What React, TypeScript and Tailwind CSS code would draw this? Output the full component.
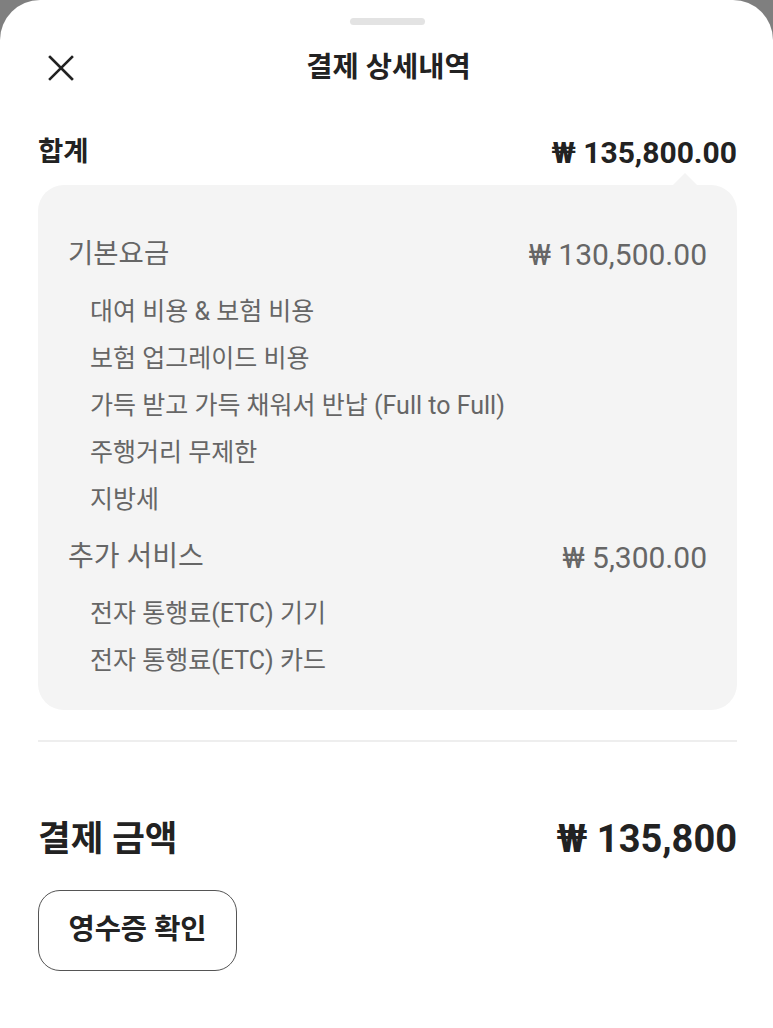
import React from "react";

const font = { fontFamily: "Roboto, 'Noto Sans CJK KR', sans-serif" };

function Sub({ children }: { children: React.ReactNode }) {
  return <div className="h-[47px] flex items-center pl-[22px] text-[25px] text-[#666]">{children}</div>;
}

export default function App() {
  return (
    <div className="w-[773px] h-[1028px] bg-[#7f7f7f] overflow-hidden" style={font}>
      <div className="w-full h-full bg-white rounded-t-[40px] flex flex-col pl-[38px] pr-[36px]">
        <div className="flex justify-center pt-[18px]">
          <div className="w-[75px] h-[7px] rounded-full bg-[#e3e3e3]" />
        </div>
        <div className="relative h-[72px] mt-[7px] flex items-center justify-center">
          <svg className="absolute left-[10px] top-[23px]" width="26" height="26" viewBox="0 0 26 26" fill="none" stroke="#222" strokeWidth="2.6" strokeLinecap="square">
            <path d="M2 2 L24 24 M24 2 L2 24" />
          </svg>
          <span className="text-[28.5px] font-bold text-[#222] ml-[2px]">결제 상세내역</span>
        </div>
        <div className="h-[66px] mt-[15px] flex items-center justify-between text-[#222]">
          <span className="text-[27.5px] font-bold">합계</span>
          <span className="text-[30px] font-bold">₩ 135,800.00</span>
        </div>
        <div className="relative bg-[#f4f4f4] rounded-[26px] pt-[44px] pb-[25px] pl-[30px] pr-[30px]">
          <div className="absolute right-[40px] -top-[12px] w-0 h-0 border-l-[12px] border-r-[12px] border-b-[12px] border-l-transparent border-r-transparent border-b-[#f4f4f4]" />
          <div className="h-[50px] flex items-center justify-between text-[#666]">
            <span className="text-[27.5px]">기본요금</span>
            <span className="text-[30px]">₩ 130,500.00</span>
          </div>
          <div className="mt-[9.5px]">
            <Sub>대여 비용 &amp; 보험 비용</Sub>
            <Sub>보험 업그레이드 비용</Sub>
            <Sub>가득 받고 가득 채워서 반납 (Full to Full)</Sub>
            <Sub>주행거리 무제한</Sub>
            <Sub>지방세</Sub>
          </div>
          <div className="h-[56px] flex items-center justify-between text-[#666] mt-[5.5px]">
            <span className="text-[28px]">추가 서비스</span>
            <span className="text-[30px]">₩ 5,300.00</span>
          </div>
          <div className="mt-[5.5px]">
            <Sub>전자 통행료(ETC) 기기</Sub>
            <Sub>전자 통행료(ETC) 카드</Sub>
          </div>
        </div>
        <div className="h-[2px] bg-[#eeeeee] mt-[30px]" />
        <div className="h-[60px] mt-[68px] flex items-center justify-between text-[#222]">
          <span className="text-[35.5px] font-bold">결제 금액</span>
          <span className="text-[38px] font-bold">₩ 135,800</span>
        </div>
        <div className="mt-[20px]">
          <button className="w-[199px] h-[81px] rounded-[22px] border border-[#555] bg-white text-[28.5px] font-bold text-[#222]" style={font}>
            영수증 확인
          </button>
        </div>
      </div>
    </div>
  );
}
